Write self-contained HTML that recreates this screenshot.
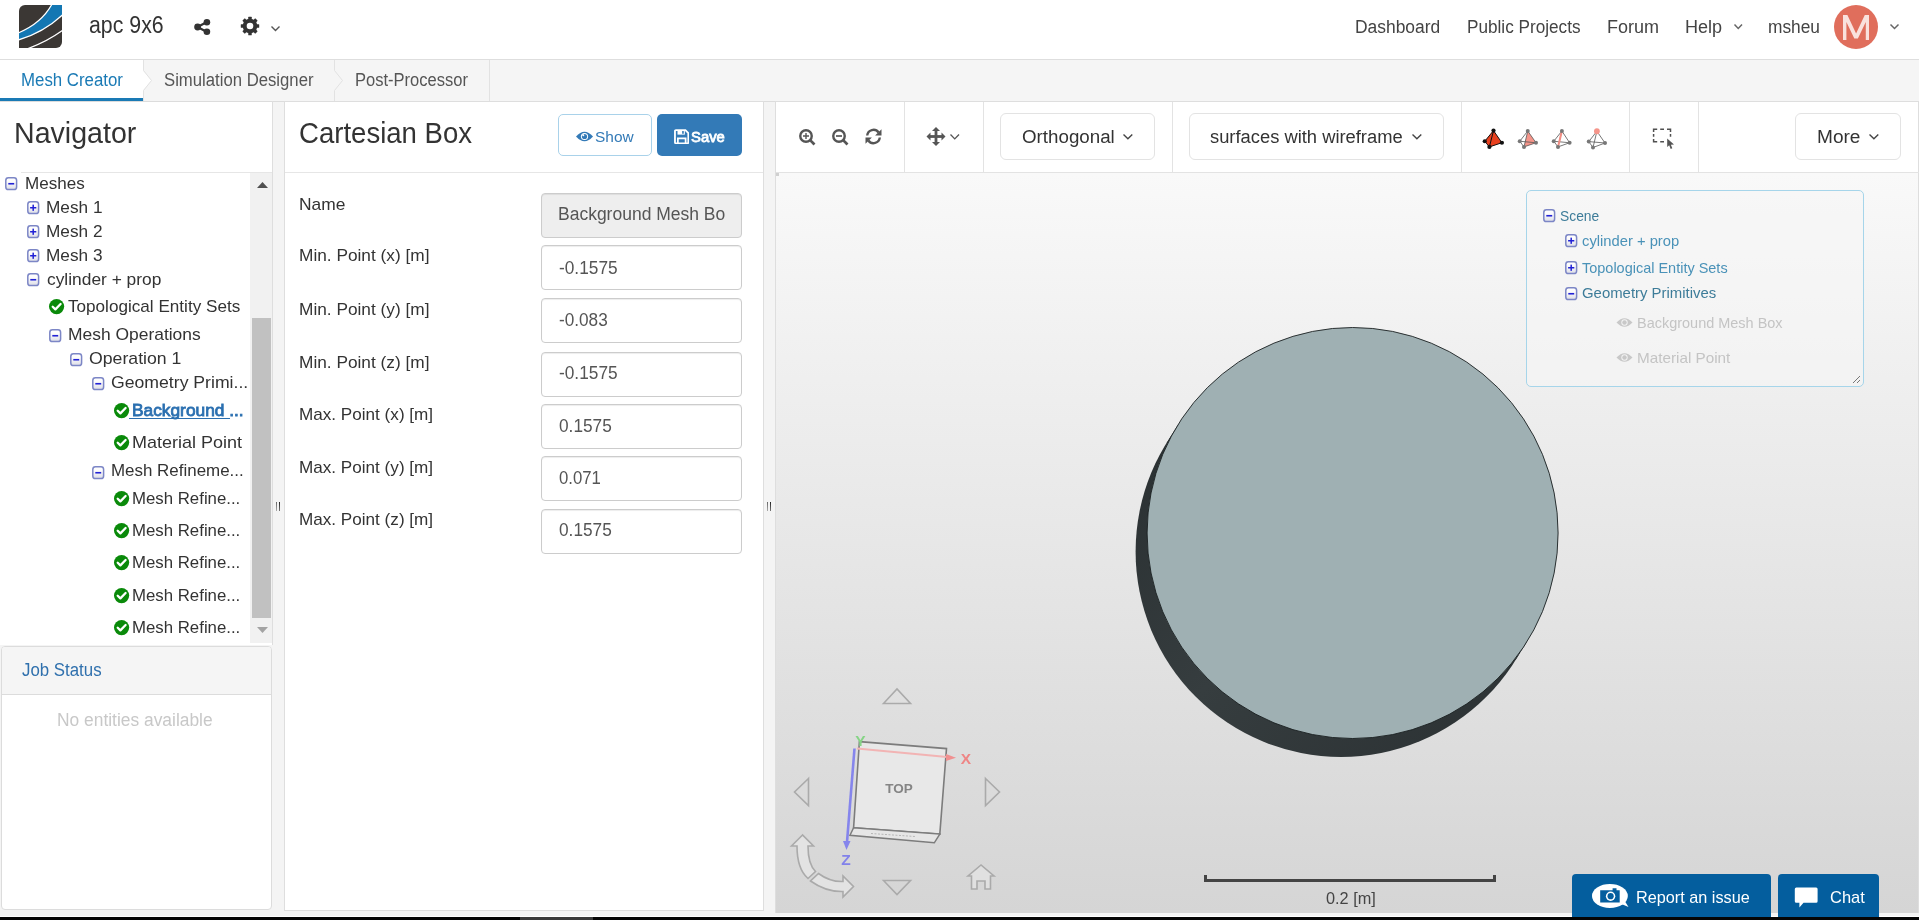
<!DOCTYPE html>
<html><head><meta charset="utf-8"><title>Mesh Creator</title><style>
*{box-sizing:border-box}
html,body{margin:0;padding:0}
body{width:1919px;height:920px;overflow:hidden;position:relative;background:#f4f4f4;font-family:"Liberation Sans",sans-serif}
.a{position:absolute;display:block}
.t{position:absolute;white-space:pre;transform-origin:0 0;font-family:"Liberation Sans",sans-serif}
.ti{position:absolute;width:12px;height:12px;border:1px solid #8592cc;border-radius:3px;background:linear-gradient(#fff 35%,#d4d6e0)}
.ti i{position:absolute;background:#2d2fd8}
.ti i.h{left:1.7px;top:4.1px;width:6.6px;height:1.8px}
.ti i.v{left:4.2px;top:1.7px;width:1.6px;height:6.6px}
.fld{position:absolute;left:541px;width:201px;height:45px;border:1px solid #ccc;border-radius:4px;background:#fff;box-shadow:inset 0 1px 1px rgba(0,0,0,.075)}
.sep{position:absolute;top:102px;width:1px;height:70px;background:#e3e3e3}
.dd{position:absolute;top:113px;height:46px;border:1px solid #e3e3e3;border-radius:6px;background:#fff}
</style></head><body>
<div class="a" style="left:0;top:0;width:1919px;height:59px;background:#fff"></div>
<div class="a" style="left:0;top:59px;width:1919px;height:1px;background:#dedede"></div>
<svg class="a" style="left:19px;top:5px" width="43" height="43" viewBox="0 0 43 43">
<defs><clipPath id="lc"><path d="M6 0H43V37A6 6 0 0 1 37 43H0V6A6 6 0 0 1 6 0Z"/></clipPath></defs>
<g clip-path="url(#lc)"><rect width="43" height="43" fill="#3b3734"/>
<path d="M32.75 -0.5 C27 10 18 20 0 27.6 L0 34.8 C17 30 31 21.5 43.5 10 L43.5 -0.5Z" fill="#1377b3"/>
<path d="M32.75 -0.5 C27 10 18 20 -0.5 27.8" stroke="#fff" stroke-width="1.25" fill="none"/>
<path d="M43.5 10 C31 21.5 17 30 -0.5 34.9" stroke="#fff" stroke-width="1.25" fill="none"/>
<path d="M43.5 25.5 C33 33 22 39 9 43.5" stroke="#fff" stroke-width="1.25" fill="none"/>
</g></svg>
<svg class="a" style="left:193.4px;top:18.4px" width="19" height="18" viewBox="0 0 19 18">
<path d="M4.5 9 L13.5 4.2 M4.5 9 L13.5 13.8" stroke="#333" stroke-width="2.2"/>
<circle cx="4.6" cy="9" r="3.4" fill="#333"/><circle cx="13.9" cy="4.3" r="3.3" fill="#333"/><circle cx="13.9" cy="13.7" r="3.3" fill="#333"/></svg>
<svg class="a" style="left:240.4px;top:16.3px" width="20" height="20" viewBox="-10 -10 20 20">
<g fill="#333"><rect x="-1.75" y="-9.2" width="3.5" height="5" rx="0.5" transform="rotate(0)"/><rect x="-1.75" y="-9.2" width="3.5" height="5" rx="0.5" transform="rotate(45)"/><rect x="-1.75" y="-9.2" width="3.5" height="5" rx="0.5" transform="rotate(90)"/><rect x="-1.75" y="-9.2" width="3.5" height="5" rx="0.5" transform="rotate(135)"/><rect x="-1.75" y="-9.2" width="3.5" height="5" rx="0.5" transform="rotate(180)"/><rect x="-1.75" y="-9.2" width="3.5" height="5" rx="0.5" transform="rotate(225)"/><rect x="-1.75" y="-9.2" width="3.5" height="5" rx="0.5" transform="rotate(270)"/><rect x="-1.75" y="-9.2" width="3.5" height="5" rx="0.5" transform="rotate(315)"/><circle r="7.3"/></g><circle r="3.3" fill="#fff"/></svg>
<svg class="a" style="left:270px;top:25px" width="11" height="7" viewBox="-1 -1 11 7"><path d="M0.5 0.5 L4.5 4.5 L8.5 0.5" fill="none" stroke="#555" stroke-width="1.4"/></svg>
<svg class="a" style="left:1733px;top:22.5px" width="10.5" height="7" viewBox="-1 -1 10.5 7"><path d="M0.5 0.5 L4.25 4.5 L8.0 0.5" fill="none" stroke="#666" stroke-width="1.5"/></svg>
<div class="a" style="left:1834px;top:5px;width:44px;height:44px;border-radius:50%;background:#e06e5c"></div>
<svg class="a" style="left:1843px;top:14.7px" width="26.2" height="25.2" viewBox="0 0 26.2 25.2"><path d="M0 25.2 V0 H4.4 L13.1 18.6 L21.8 0 H26.2 V25.2 H22.8 V7 L14.9 23.6 H11.3 L3.4 7 V25.2Z" fill="#f9e1dd"/></svg>
<svg class="a" style="left:1889px;top:22.5px" width="11" height="7" viewBox="-1 -1 11 7"><path d="M0.5 0.5 L4.5 4.5 L8.5 0.5" fill="none" stroke="#666" stroke-width="1.5"/></svg>
<div class="a" style="left:0;top:60px;width:1919px;height:41px;background:#f5f5f5"></div>
<div class="a" style="left:0;top:101px;width:1919px;height:1px;background:#dcdcdc"></div>
<div class="a" style="left:0;top:60px;width:143px;height:41px;background:#fff"></div>
<div class="a" style="left:0;top:98px;width:143px;height:3px;background:#1a7ab5"></div>
<svg class="a" style="left:141px;top:60px" width="14" height="41" viewBox="0 0 14 41"><path d="M2 0 V10.5 L10.5 20.5 L2 30.5 V41" fill="#fff" stroke="none"/><path d="M2.5 0 V10.5 L10.5 20.5 L2.5 30.5 V41" fill="none" stroke="#e2e2e2" stroke-width="1"/></svg>
<svg class="a" style="left:333px;top:60px" width="14" height="41" viewBox="0 0 14 41"><path d="M1.5 0 V10.5 L9.5 20.5 L1.5 30.5 V41" fill="none" stroke="#e2e2e2" stroke-width="1"/></svg>
<div class="a" style="left:489px;top:60px;width:1px;height:41px;background:#e2e2e2"></div>
<div class="a" style="left:0;top:102px;width:272px;height:543px;background:#fff"></div>
<div class="a" style="left:272px;top:101px;width:1px;height:544px;background:#dedede"></div>
<div class="a" style="left:21px;top:172px;width:251px;height:1px;background:#e6e6e6"></div>
<div class="a" style="left:250px;top:173px;width:22px;height:470px;background:#f1f1f1"></div>
<div class="a" style="left:252px;top:318px;width:19px;height:300px;background:#c1c1c1"></div>
<svg class="a" style="left:256px;top:181px" width="13" height="8"><path d="M1 7 L6.5 1 L12 7Z" fill="#505050"/></svg>
<svg class="a" style="left:256px;top:626px" width="13" height="8"><path d="M1 1 L6.5 7 L12 1Z" fill="#a3a3a3"/></svg>
<svg class="a" style="left:4.80px;top:176.90px" width="13" height="14" viewBox="0 0 13 14"><defs><linearGradient id="tg" x1="0" y1="0" x2="0" y2="1"><stop offset="0.3" stop-color="#fdfdfd"/><stop offset="1" stop-color="#dcdde6"/></linearGradient></defs><rect x="0.8" y="0.8" width="10.8" height="11.8" rx="2.6" fill="url(#tg)" stroke="#7c86c6" stroke-width="1.5"/><rect x="3.3" y="5.95" width="5.9" height="1.6" fill="#2222d6"/></svg>
<svg class="a" style="left:26.80px;top:200.90px" width="13" height="14" viewBox="0 0 13 14"><rect x="0.8" y="0.8" width="10.8" height="11.8" rx="2.6" fill="url(#tg)" stroke="#7c86c6" stroke-width="1.5"/><rect x="3.1" y="6.0" width="6.2" height="1.5" fill="#2222d6"/><rect x="5.45" y="3.65" width="1.5" height="6.2" fill="#2222d6"/></svg>
<svg class="a" style="left:26.80px;top:224.90px" width="13" height="14" viewBox="0 0 13 14"><rect x="0.8" y="0.8" width="10.8" height="11.8" rx="2.6" fill="url(#tg)" stroke="#7c86c6" stroke-width="1.5"/><rect x="3.1" y="6.0" width="6.2" height="1.5" fill="#2222d6"/><rect x="5.45" y="3.65" width="1.5" height="6.2" fill="#2222d6"/></svg>
<svg class="a" style="left:26.80px;top:248.90px" width="13" height="14" viewBox="0 0 13 14"><rect x="0.8" y="0.8" width="10.8" height="11.8" rx="2.6" fill="url(#tg)" stroke="#7c86c6" stroke-width="1.5"/><rect x="3.1" y="6.0" width="6.2" height="1.5" fill="#2222d6"/><rect x="5.45" y="3.65" width="1.5" height="6.2" fill="#2222d6"/></svg>
<svg class="a" style="left:26.80px;top:272.90px" width="13" height="14" viewBox="0 0 13 14"><defs><linearGradient id="tg" x1="0" y1="0" x2="0" y2="1"><stop offset="0.3" stop-color="#fdfdfd"/><stop offset="1" stop-color="#dcdde6"/></linearGradient></defs><rect x="0.8" y="0.8" width="10.8" height="11.8" rx="2.6" fill="url(#tg)" stroke="#7c86c6" stroke-width="1.5"/><rect x="3.3" y="5.95" width="5.9" height="1.6" fill="#2222d6"/></svg>
<svg class="a" style="left:47.90px;top:297.90px" width="17.2" height="17.2" viewBox="-8.6 -8.6 17.2 17.2"><circle r="7.6" fill="#0a8a0a"/><path d="M-3.9 0.1 L-1.2 2.8 L4 -2.6" stroke="#fff" stroke-width="2.3" fill="none" stroke-linecap="round" stroke-linejoin="round"/></svg>
<svg class="a" style="left:48.80px;top:328.90px" width="13" height="14" viewBox="0 0 13 14"><defs><linearGradient id="tg" x1="0" y1="0" x2="0" y2="1"><stop offset="0.3" stop-color="#fdfdfd"/><stop offset="1" stop-color="#dcdde6"/></linearGradient></defs><rect x="0.8" y="0.8" width="10.8" height="11.8" rx="2.6" fill="url(#tg)" stroke="#7c86c6" stroke-width="1.5"/><rect x="3.3" y="5.95" width="5.9" height="1.6" fill="#2222d6"/></svg>
<svg class="a" style="left:69.80px;top:352.90px" width="13" height="14" viewBox="0 0 13 14"><defs><linearGradient id="tg" x1="0" y1="0" x2="0" y2="1"><stop offset="0.3" stop-color="#fdfdfd"/><stop offset="1" stop-color="#dcdde6"/></linearGradient></defs><rect x="0.8" y="0.8" width="10.8" height="11.8" rx="2.6" fill="url(#tg)" stroke="#7c86c6" stroke-width="1.5"/><rect x="3.3" y="5.95" width="5.9" height="1.6" fill="#2222d6"/></svg>
<svg class="a" style="left:91.80px;top:376.90px" width="13" height="14" viewBox="0 0 13 14"><defs><linearGradient id="tg" x1="0" y1="0" x2="0" y2="1"><stop offset="0.3" stop-color="#fdfdfd"/><stop offset="1" stop-color="#dcdde6"/></linearGradient></defs><rect x="0.8" y="0.8" width="10.8" height="11.8" rx="2.6" fill="url(#tg)" stroke="#7c86c6" stroke-width="1.5"/><rect x="3.3" y="5.95" width="5.9" height="1.6" fill="#2222d6"/></svg>
<svg class="a" style="left:113.00px;top:402.00px" width="17.2" height="17.2" viewBox="-8.6 -8.6 17.2 17.2"><circle r="7.6" fill="#0a8a0a"/><path d="M-3.9 0.1 L-1.2 2.8 L4 -2.6" stroke="#fff" stroke-width="2.3" fill="none" stroke-linecap="round" stroke-linejoin="round"/></svg>
<div class="a" style="left:129px;top:418px;width:101px;height:1.3px;background:#2a6fb0"></div>
<svg class="a" style="left:113.00px;top:434.00px" width="17.2" height="17.2" viewBox="-8.6 -8.6 17.2 17.2"><circle r="7.6" fill="#0a8a0a"/><path d="M-3.9 0.1 L-1.2 2.8 L4 -2.6" stroke="#fff" stroke-width="2.3" fill="none" stroke-linecap="round" stroke-linejoin="round"/></svg>
<svg class="a" style="left:91.80px;top:465.70px" width="13" height="14" viewBox="0 0 13 14"><defs><linearGradient id="tg" x1="0" y1="0" x2="0" y2="1"><stop offset="0.3" stop-color="#fdfdfd"/><stop offset="1" stop-color="#dcdde6"/></linearGradient></defs><rect x="0.8" y="0.8" width="10.8" height="11.8" rx="2.6" fill="url(#tg)" stroke="#7c86c6" stroke-width="1.5"/><rect x="3.3" y="5.95" width="5.9" height="1.6" fill="#2222d6"/></svg>
<svg class="a" style="left:113.00px;top:489.80px" width="17.2" height="17.2" viewBox="-8.6 -8.6 17.2 17.2"><circle r="7.6" fill="#0a8a0a"/><path d="M-3.9 0.1 L-1.2 2.8 L4 -2.6" stroke="#fff" stroke-width="2.3" fill="none" stroke-linecap="round" stroke-linejoin="round"/></svg>
<svg class="a" style="left:113.00px;top:522.10px" width="17.2" height="17.2" viewBox="-8.6 -8.6 17.2 17.2"><circle r="7.6" fill="#0a8a0a"/><path d="M-3.9 0.1 L-1.2 2.8 L4 -2.6" stroke="#fff" stroke-width="2.3" fill="none" stroke-linecap="round" stroke-linejoin="round"/></svg>
<svg class="a" style="left:113.00px;top:554.00px" width="17.2" height="17.2" viewBox="-8.6 -8.6 17.2 17.2"><circle r="7.6" fill="#0a8a0a"/><path d="M-3.9 0.1 L-1.2 2.8 L4 -2.6" stroke="#fff" stroke-width="2.3" fill="none" stroke-linecap="round" stroke-linejoin="round"/></svg>
<svg class="a" style="left:113.00px;top:586.60px" width="17.2" height="17.2" viewBox="-8.6 -8.6 17.2 17.2"><circle r="7.6" fill="#0a8a0a"/><path d="M-3.9 0.1 L-1.2 2.8 L4 -2.6" stroke="#fff" stroke-width="2.3" fill="none" stroke-linecap="round" stroke-linejoin="round"/></svg>
<svg class="a" style="left:113.00px;top:618.80px" width="17.2" height="17.2" viewBox="-8.6 -8.6 17.2 17.2"><circle r="7.6" fill="#0a8a0a"/><path d="M-3.9 0.1 L-1.2 2.8 L4 -2.6" stroke="#fff" stroke-width="2.3" fill="none" stroke-linecap="round" stroke-linejoin="round"/></svg>
<div class="a" style="left:276px;top:502px;width:1px;height:9px;background:linear-gradient(#666,#aaa)"></div><div class="a" style="left:279px;top:502px;width:1px;height:9px;background:linear-gradient(#222,#777)"></div>
<div class="a" style="left:767px;top:502px;width:1px;height:9px;background:linear-gradient(#666,#aaa)"></div><div class="a" style="left:770px;top:502px;width:1px;height:9px;background:linear-gradient(#222,#777)"></div>
<div class="a" style="left:1px;top:646px;width:271px;height:264px;border:1px solid #dcdcdc;border-radius:4px;background:#fff;overflow:hidden"><div style="height:48px;background:#f5f5f5;border-bottom:1px solid #dcdcdc"></div></div>
<div class="a" style="left:284px;top:101px;width:480px;height:810px;border:1px solid #dedede;background:#fff"></div>
<div class="a" style="left:285px;top:172px;width:478px;height:1px;background:#e6e6e6"></div>
<div class="a" style="left:558px;top:114px;width:94px;height:42px;border:1px solid #a9d2ea;border-radius:5px;background:#fff"></div>
<div class="a" style="left:657px;top:114px;width:85px;height:42px;border-radius:5px;background:#337ab7"></div>
<svg class="a" style="left:575px;top:130px" width="19" height="13" viewBox="0 0 19 13"><path d="M1 6.5 Q9.5 -3 18 6.5 Q9.5 16 1 6.5Z" fill="#337ab7"/><circle cx="9.5" cy="6.5" r="3.6" fill="#fff"/><circle cx="9.5" cy="6.5" r="2.6" fill="#337ab7"/><circle cx="8.3" cy="5.3" r="1" fill="#fff"/></svg>
<svg class="a" style="left:673.5px;top:128.6px" width="15.5" height="15.5" viewBox="0 0 16 16"><path d="M2 1.2 H11.8 L14.8 4.2 V13.8 Q14.8 14.8 13.8 14.8 H2 Q1 14.8 1 13.8 V2.2 Q1 1.2 2 1.2Z" fill="none" stroke="#fff" stroke-width="1.9"/><rect x="3.6" y="1.2" width="7.6" height="4.6" fill="#fff"/><rect x="8.4" y="2.1" width="1.7" height="2.8" fill="#337ab7"/><path d="M4 14.8 V9.6 H12 V14.8" fill="none" stroke="#fff" stroke-width="1.8"/></svg>
<div class="fld" style="top:193.4px;background:#eee"></div>
<div class="fld" style="top:245.4px;background:#fff"></div>
<div class="fld" style="top:298.4px;background:#fff"></div>
<div class="fld" style="top:351.5px;background:#fff"></div>
<div class="fld" style="top:403.6px;background:#fff"></div>
<div class="fld" style="top:456.3px;background:#fff"></div>
<div class="fld" style="top:508.7px;background:#fff"></div>
<div class="a" style="left:775px;top:101px;width:1144px;height:812px;border:1px solid #dedede;border-bottom:none;background:#fff"></div>
<div class="a" style="left:776px;top:172px;width:1143px;height:1px;background:#e3e3e3"></div>
<div class="a" style="left:776px;top:173px;width:1142px;height:740px;background:linear-gradient(#f9f9f9,#d5d5d5)"></div>
<div class="a" style="left:776px;top:173px;width:3px;height:3px;background:#d0d0d0"></div>
<div class="sep" style="left:904px"></div>
<div class="sep" style="left:983px"></div>
<div class="sep" style="left:1172px"></div>
<div class="sep" style="left:1461px"></div>
<div class="sep" style="left:1629px"></div>
<div class="sep" style="left:1698px"></div>
<div class="dd" style="left:1000px;width:155px;top:113.2px;height:46.5px"></div>
<div class="dd" style="left:1189px;width:255px;top:113.2px;height:46.5px"></div>
<div class="dd" style="left:1795px;width:106px;top:113.2px;height:46.5px"></div>
<svg class="a" style="left:1122px;top:133.2px" width="11.8" height="7.2" viewBox="-1 -1 11.8 7.2"><path d="M0.5 0.5 L4.9 4.7 L9.3 0.5" fill="none" stroke="#444" stroke-width="1.4"/></svg>
<svg class="a" style="left:1411px;top:133.2px" width="11.8" height="7.2" viewBox="-1 -1 11.8 7.2"><path d="M0.5 0.5 L4.9 4.7 L9.3 0.5" fill="none" stroke="#444" stroke-width="1.4"/></svg>
<svg class="a" style="left:1868px;top:133.2px" width="11.8" height="7.2" viewBox="-1 -1 11.8 7.2"><path d="M0.5 0.5 L4.9 4.7 L9.3 0.5" fill="none" stroke="#444" stroke-width="1.4"/></svg>
<svg class="a" style="left:948.5px;top:133px" width="11.5" height="7.4" viewBox="-1 -1 11.5 7.4"><path d="M0.5 0.5 L4.75 4.9 L9.0 0.5" fill="none" stroke="#555" stroke-width="1.35"/></svg>
<svg class="a" style="left:798.6px;top:128.65px" width="18" height="18" viewBox="0 0 18 18"><circle cx="7" cy="7" r="5.75" fill="none" stroke="#555" stroke-width="2.4"/><path d="M10.9 10.9 L15.5 15.5" stroke="#555" stroke-width="2.7"/><path d="M7 4 V10 M4 7 H10" stroke="#555" stroke-width="1.4"/></svg>
<svg class="a" style="left:831.9px;top:128.65px" width="18" height="18" viewBox="0 0 18 18"><circle cx="7" cy="7" r="5.75" fill="none" stroke="#555" stroke-width="2.4"/><path d="M10.9 10.9 L15.5 15.5" stroke="#555" stroke-width="2.7"/><path d="M4 7 H10" stroke="#555" stroke-width="1.7"/></svg>
<svg class="a" style="left:864.5px;top:128px" width="17" height="17" viewBox="0 0 17 17"><g fill="none" stroke="#555" stroke-width="2.4"><path d="M2.2 7.5 A6.3 6.3 0 0 1 13.6 4.5"/><path d="M14.8 9.5 A6.3 6.3 0 0 1 3.4 12.5"/></g><path d="M16.5 1.2 V7.6 H10.1Z" fill="#555"/><path d="M0.5 15.8 V9.4 H6.9Z" fill="#555"/></svg>
<svg class="a" style="left:926.3px;top:127.1px" width="20" height="19" viewBox="0 0 20 19"><g fill="#555"><rect x="8.6" y="3" width="2.8" height="13"/><rect x="3" y="8.1" width="14" height="2.8"/><path d="M10 0 L14 4 H6Z M10 19 L14 15 H6Z M0.5 9.5 L4.5 5.5 V13.5Z M19.5 9.5 L15.5 5.5 V13.5Z"/></g></svg>
<svg class="a" style="left:1470px;top:115px" width="150" height="45" viewBox="1470 115 150 45"><path d="M1493.5,130.6 L1484.75,141.25 L1489.4,146.9 L1501.9,142.75Z" fill="#e8401e" stroke="#111" stroke-width="1"/><path d="M1493.5,130.6 L1489.4,146.9" stroke="#111" stroke-width="1"/><circle cx="1493.5" cy="130.6" r="2.1" fill="#111"/><circle cx="1484.75" cy="141.25" r="2.1" fill="#111"/><circle cx="1489.4" cy="146.9" r="2.1" fill="#111"/><circle cx="1501.9" cy="142.75" r="2.1" fill="#111"/><path d="M1527.75,131 L1524,146.9 L1536,142.75Z" fill="#f5958a"/><path d="M1527.75,131 L1519.75,141.25" stroke="#555" stroke-width="0.8"/><path d="M1527.75,131 L1524,146.9" stroke="#555" stroke-width="0.8"/><path d="M1527.75,131 L1536,142.75" stroke="#555" stroke-width="0.8"/><path d="M1519.75,141.25 L1524,146.9" stroke="#555" stroke-width="0.8"/><path d="M1524,146.9 L1536,142.75" stroke="#555" stroke-width="0.8"/><path d="M1519.75,141.25 L1536,142.75" stroke="#555" stroke-width="0.8"/><circle cx="1519.75" cy="141.25" r="2" fill="#777"/><circle cx="1524" cy="146.9" r="2" fill="#777"/><circle cx="1536" cy="142.75" r="2" fill="#777"/><circle cx="1527.75" cy="131" r="2" fill="#777"/><path d="M1561.9,131 L1553.75,141.25" stroke="#555" stroke-width="0.8"/><path d="M1561.9,131 L1558,146.9" stroke="#555" stroke-width="0.8"/><path d="M1561.9,131 L1569.6,142.75" stroke="#555" stroke-width="0.8"/><path d="M1553.75,141.25 L1558,146.9" stroke="#555" stroke-width="0.8"/><path d="M1558,146.9 L1569.6,142.75" stroke="#555" stroke-width="0.8"/><path d="M1553.75,141.25 L1569.6,142.75" stroke="#555" stroke-width="0.8"/><path d="M1561.9,131 L1558,146.9" stroke="#f28e84" stroke-width="2"/><circle cx="1553.75" cy="141.25" r="2" fill="#777"/><circle cx="1558" cy="146.9" r="2" fill="#777"/><circle cx="1569.6" cy="142.75" r="2" fill="#777"/><circle cx="1561.9" cy="131" r="2" fill="#777"/><path d="M1596.9,131.25 L1588.75,141.6" stroke="#555" stroke-width="0.8"/><path d="M1596.9,131.25 L1593,147.5" stroke="#555" stroke-width="0.8"/><path d="M1596.9,131.25 L1605,143" stroke="#555" stroke-width="0.8"/><path d="M1588.75,141.6 L1593,147.5" stroke="#555" stroke-width="0.8"/><path d="M1593,147.5 L1605,143" stroke="#555" stroke-width="0.8"/><path d="M1588.75,141.6 L1605,143" stroke="#555" stroke-width="0.8"/><circle cx="1588.75" cy="141.6" r="2" fill="#777"/><circle cx="1593" cy="147.5" r="2" fill="#777"/><circle cx="1605" cy="143" r="2" fill="#777"/><circle cx="1596.9" cy="131.25" r="2.9" fill="#f5958a"/></svg>
<svg class="a" style="left:1650px;top:126px" width="28" height="28" viewBox="1650 126 28 28"><path d="M1653.6 132 V129.2 H1657.2 M1660.2 129.2 H1664 M1667 129.2 H1670.5 V132 M1653.6 133.9 V136.8 M1670.5 133.9 V136.8 M1653.6 138.9 V141.7 H1657.2 M1660.2 141.7 H1664" fill="none" stroke="#505050" stroke-width="1.5"/><path d="M1667.2 138.5 V147 L1669.2 145.2 L1670.7 149 L1672.3 148.3 L1670.9 144.7 L1674 144.5Z" fill="#555"/></svg>
<div class="a" style="left:1526px;top:190px;width:338px;height:197px;border:1px solid #a6d5ea;border-radius:5px;background:rgba(245,245,245,0.55)"></div>
<svg class="a" style="left:1851px;top:374px" width="10" height="10"><path d="M9 2 L2 9 M9 6 L6 9" stroke="#777" stroke-width="1"/></svg>
<svg class="a" style="left:1543.30px;top:209.40px" width="13" height="14" viewBox="0 0 13 14"><defs><linearGradient id="tg" x1="0" y1="0" x2="0" y2="1"><stop offset="0.3" stop-color="#fdfdfd"/><stop offset="1" stop-color="#dcdde6"/></linearGradient></defs><rect x="0.8" y="0.8" width="10.8" height="11.8" rx="2.6" fill="url(#tg)" stroke="#7c86c6" stroke-width="1.5"/><rect x="3.3" y="5.95" width="5.9" height="1.6" fill="#2222d6"/></svg>
<svg class="a" style="left:1565.30px;top:234.40px" width="13" height="14" viewBox="0 0 13 14"><rect x="0.8" y="0.8" width="10.8" height="11.8" rx="2.6" fill="url(#tg)" stroke="#7c86c6" stroke-width="1.5"/><rect x="3.1" y="6.0" width="6.2" height="1.5" fill="#2222d6"/><rect x="5.45" y="3.65" width="1.5" height="6.2" fill="#2222d6"/></svg>
<svg class="a" style="left:1565.30px;top:261.40px" width="13" height="14" viewBox="0 0 13 14"><rect x="0.8" y="0.8" width="10.8" height="11.8" rx="2.6" fill="url(#tg)" stroke="#7c86c6" stroke-width="1.5"/><rect x="3.1" y="6.0" width="6.2" height="1.5" fill="#2222d6"/><rect x="5.45" y="3.65" width="1.5" height="6.2" fill="#2222d6"/></svg>
<svg class="a" style="left:1565.30px;top:287.20px" width="13" height="14" viewBox="0 0 13 14"><defs><linearGradient id="tg" x1="0" y1="0" x2="0" y2="1"><stop offset="0.3" stop-color="#fdfdfd"/><stop offset="1" stop-color="#dcdde6"/></linearGradient></defs><rect x="0.8" y="0.8" width="10.8" height="11.8" rx="2.6" fill="url(#tg)" stroke="#7c86c6" stroke-width="1.5"/><rect x="3.3" y="5.95" width="5.9" height="1.6" fill="#2222d6"/></svg>
<svg class="a" style="left:1615.5px;top:317px" width="17" height="11" viewBox="0 0 17 11"><path d="M0.5 5.5 Q8.5 -3 16.5 5.5 Q8.5 14 0.5 5.5Z" fill="#c8c8c8"/><circle cx="8.5" cy="5.5" r="3.2" fill="#f3f3f3"/><circle cx="8.5" cy="5.5" r="2.2" fill="#c8c8c8"/></svg>
<svg class="a" style="left:1615.5px;top:352px" width="17" height="11" viewBox="0 0 17 11"><path d="M0.5 5.5 Q8.5 -3 16.5 5.5 Q8.5 14 0.5 5.5Z" fill="#c8c8c8"/><circle cx="8.5" cy="5.5" r="3.2" fill="#f3f3f3"/><circle cx="8.5" cy="5.5" r="2.2" fill="#c8c8c8"/></svg>
<svg class="a" style="left:1100px;top:300px" width="500" height="480" viewBox="1100 300 500 480"><defs><linearGradient id="cg" x1="0" y1="0" x2="1" y2="1"><stop offset="0" stop-color="#262c2e"/><stop offset="0.5" stop-color="#363d3f"/><stop offset="1" stop-color="#2a3032"/></linearGradient></defs><circle cx="1341.1" cy="551.5" r="205.5" fill="url(#cg)"/><path d="M1527.1281343468984,641.4904618913152 L1515.6281343468984,659.9904618913152 L1166.5718656531014,443.0095381086847 L1178.0718656531014,424.5095381086847Z" fill="url(#cg)"/><circle cx="1352.6" cy="533.0" r="205.5" fill="#9fb0b3" stroke="#1a1f20" stroke-width="0.9"/></svg>
<svg class="a" style="left:776px;top:670px;will-change:transform" width="250" height="241" viewBox="776 670 250 241">
<g fill="none" stroke="#aaa" stroke-width="1.6">
<path d="M883.5 703.5 L897 689 L910.5 703.5Z"/>
<path d="M883.5 880.5 L897 894.5 L910.5 880.5Z"/>
<path d="M808.5 778.5 L794.5 792 L808.5 805.5Z"/>
<path d="M985.5 778.5 L999.5 792 L985.5 805.5Z"/>
<path d="M981 865 L968 876 H971.5 V889 H977 V881 H985 V889 H990.5 V876 H994 Z" fill="#e0e0e0"/>
<path d="M802.5 835 L791.5 846 H797 Q797 869 808 878.5 L815.5 871.5 Q808 864 808 846 H813.5Z" fill="#e3e3e3"/>
<path d="M810.5 881 Q826 892 843 891.5 V897 L853.5 886.5 L843 876 V881.5 Q830 882 818.5 873.5Z" fill="#e3e3e3"/>
</g>
<path d="M859.4 741.6 L946.5 748.6 L939.8 834.1 L853.6 827.8Z" fill="#e8e8e8" stroke="#7c7c7c" stroke-width="1.6"/>
<path d="M853.6 827.8 L850 835.3 L934.3 842.8 L939.8 834.1Z" fill="#e6e6e6" stroke="#7c7c7c" stroke-width="1.5"/>
<path d="M871 833.5 L915 836.5" stroke="#aaa" stroke-width="0.8" stroke-dasharray="2 1.5"/>
<text x="899" y="792.6" font-family="Liberation Sans" font-size="13.5" font-weight="bold" fill="#858585" text-anchor="middle">TOP</text>
<path d="M857 748.6 L947 757" stroke="#f2b4b4" stroke-width="2"/>
<path d="M946 754 L956 757.8 L946 761Z" fill="#f09090"/>
<text x="966" y="763.5" font-family="Liberation Sans" font-size="15.5" font-weight="bold" fill="#ee8585" text-anchor="middle">X</text>
<path d="M854.5 748.5 L847 842" stroke="#8585ec" stroke-width="2.6"/>
<path d="M843 841 L846.5 850 L850.5 841Z" fill="#8585ec"/>
<text x="846" y="864.5" font-family="Liberation Sans" font-size="15.5" font-weight="bold" fill="#8282ea" text-anchor="middle">Z</text>
<text x="860.5" y="745.5" font-family="Liberation Sans" font-size="15.5" font-weight="bold" fill="#86d486" text-anchor="middle">Y</text>
</svg>
<div class="a" style="left:1204px;top:879px;width:292px;height:3px;background:#444"></div>
<div class="a" style="left:1204px;top:875px;width:3px;height:7px;background:#444"></div>
<div class="a" style="left:1493px;top:875px;width:3px;height:7px;background:#444"></div>
<div class="a" style="left:0;top:916px;width:1919px;height:1px;background:#fff"></div>
<div class="a" style="left:0;top:917px;width:1919px;height:3px;background:#050505"></div>
<div class="a" style="left:520px;top:917px;width:73px;height:3px;background:#3a3a3a"></div>
<div class="a" style="left:1572px;top:873.8px;width:199px;height:43.2px;border-radius:4px 4px 0 0;background:#045e9e"></div>
<div class="a" style="left:1778.3px;top:873.8px;width:100.5px;height:43.2px;border-radius:4px 4px 0 0;background:#045e9e"></div>
<svg class="a" style="left:1590px;top:883px" width="40" height="26" viewBox="1590 883 40 26"><ellipse cx="1609.9" cy="896" rx="17.9" ry="11.9" fill="#fff"/><path d="M1619 903 L1628.5 907 L1623.5 899Z" fill="#fff"/><path d="M1600.2 890.3 H1612.6 V888.2 H1616.5 V890.3 H1619.7 V902.4 H1600.2Z" fill="#045e9e"/><circle cx="1610.6" cy="896.2" r="4.7" fill="#fff"/><circle cx="1610.6" cy="896.2" r="3.1" fill="#045e9e"/></svg>
<svg class="a" style="left:1794px;top:887px" width="25" height="22" viewBox="1794 887 25 22"><path d="M1796.3 887.6 H1816.1 Q1817.6 887.6 1817.6 889.1 V901.3 Q1817.6 902.8 1816.1 902.8 H1803.5 L1799.4 907.6 V902.8 H1796.3 Q1794.8 902.8 1794.8 901.3 V889.1 Q1794.8 887.6 1796.3 887.6Z" fill="#fff"/></svg>
<div class="a" style="left:0;top:0;width:1919px;height:920px;will-change:transform"><span class="t" style="left:89.37px;top:14.24px;font-size:23px;line-height:23px;color:#333;font-weight:400;transform:scaleX(0.9266)">apc 9x6</span>
<span class="t" style="left:1355.03px;top:17.97px;font-size:18px;line-height:18px;color:#444;font-weight:400;transform:scaleX(0.9674)">Dashboard</span>
<span class="t" style="left:1467.05px;top:17.97px;font-size:18px;line-height:18px;color:#444;font-weight:400;transform:scaleX(0.9534)">Public Projects</span>
<span class="t" style="left:1607.00px;top:17.97px;font-size:18px;line-height:18px;color:#444;font-weight:400;transform:scaleX(1.0000)">Forum</span>
<span class="t" style="left:1684.50px;top:17.97px;font-size:18px;line-height:18px;color:#444;font-weight:400;transform:scaleX(1.0028)">Help</span>
<span class="t" style="left:1768.44px;top:17.97px;font-size:18px;line-height:18px;color:#444;font-weight:400;transform:scaleX(0.9615)">msheu</span>
<span class="t" style="left:20.56px;top:70.77px;font-size:18px;line-height:18px;color:#1a7ab5;font-weight:400;transform:scaleX(0.9352)">Mesh Creator</span>
<span class="t" style="left:164.07px;top:70.77px;font-size:18px;line-height:18px;color:#555;font-weight:400;transform:scaleX(0.9281)">Simulation Designer</span>
<span class="t" style="left:355.08px;top:70.77px;font-size:18px;line-height:18px;color:#555;font-weight:400;transform:scaleX(0.9180)">Post-Processor</span>
<span class="t" style="left:14.03px;top:119.47px;font-size:29px;line-height:29px;color:#333;font-weight:400;transform:scaleX(0.9857)">Navigator</span>
<span class="t" style="left:24.50px;top:174.62px;font-size:17px;line-height:17px;color:#333;font-weight:400;transform:scaleX(1.0034)">Meshes</span>
<span class="t" style="left:46.29px;top:198.62px;font-size:17px;line-height:17px;color:#333;font-weight:400;transform:scaleX(1.0130)">Mesh 1</span>
<span class="t" style="left:46.29px;top:222.62px;font-size:17px;line-height:17px;color:#333;font-weight:400;transform:scaleX(1.0130)">Mesh 2</span>
<span class="t" style="left:46.29px;top:246.62px;font-size:17px;line-height:17px;color:#333;font-weight:400;transform:scaleX(1.0130)">Mesh 3</span>
<span class="t" style="left:46.60px;top:270.62px;font-size:17px;line-height:17px;color:#333;font-weight:400;transform:scaleX(1.0214)">cylinder + prop</span>
<span class="t" style="left:67.80px;top:297.92px;font-size:17px;line-height:17px;color:#333;font-weight:400;transform:scaleX(1.0070)">Topological Entity Sets</span>
<span class="t" style="left:67.77px;top:326.22px;font-size:17px;line-height:17px;color:#333;font-weight:400;transform:scaleX(1.0250)">Mesh Operations</span>
<span class="t" style="left:88.96px;top:350.22px;font-size:17px;line-height:17px;color:#333;font-weight:400;transform:scaleX(1.0398)">Operation 1</span>
<span class="t" style="left:110.56px;top:374.22px;font-size:17px;line-height:17px;color:#333;font-weight:400;transform:scaleX(1.0377)">Geometry Primi...</span>
<span class="t" style="left:131.98px;top:401.62px;font-size:17px;line-height:17px;color:#2a6fb0;font-weight:400;transform:scaleX(1.0185);-webkit-text-stroke:0.8px #2a6fb0">Background ...</span>
<span class="t" style="left:131.94px;top:433.82px;font-size:17px;line-height:17px;color:#333;font-weight:400;transform:scaleX(1.0583)">Material Point</span>
<span class="t" style="left:111.00px;top:461.62px;font-size:17px;line-height:17px;color:#333;font-weight:400;transform:scaleX(0.9962)">Mesh Refineme...</span>
<span class="t" style="left:132.01px;top:489.62px;font-size:17px;line-height:17px;color:#333;font-weight:400;transform:scaleX(0.9880)">Mesh Refine...</span>
<span class="t" style="left:132.01px;top:522.12px;font-size:17px;line-height:17px;color:#333;font-weight:400;transform:scaleX(0.9880)">Mesh Refine...</span>
<span class="t" style="left:132.01px;top:554.32px;font-size:17px;line-height:17px;color:#333;font-weight:400;transform:scaleX(0.9880)">Mesh Refine...</span>
<span class="t" style="left:132.01px;top:586.92px;font-size:17px;line-height:17px;color:#333;font-weight:400;transform:scaleX(0.9880)">Mesh Refine...</span>
<span class="t" style="left:132.01px;top:619.12px;font-size:17px;line-height:17px;color:#333;font-weight:400;transform:scaleX(0.9880)">Mesh Refine...</span>
<span class="t" style="left:21.90px;top:661.07px;font-size:18px;line-height:18px;color:#2f70ad;font-weight:400;transform:scaleX(0.9353)">Job Status</span>
<span class="t" style="left:57.43px;top:710.67px;font-size:18px;line-height:18px;color:#c8c8c8;font-weight:400;transform:scaleX(0.9662)">No entities available</span>
<span class="t" style="left:298.65px;top:119.17px;font-size:29px;line-height:29px;color:#333;font-weight:400;transform:scaleX(0.9503)">Cartesian Box</span>
<span class="t" style="left:594.77px;top:129.21px;font-size:15px;line-height:15px;color:#337ab7;font-weight:400;transform:scaleX(1.0297)">Show</span>
<span class="t" style="left:690.91px;top:129.21px;font-size:15px;line-height:15px;color:#fff;font-weight:400;transform:scaleX(0.9879);-webkit-text-stroke:0.8px #fff">Save</span>
<span class="t" style="left:298.58px;top:195.82px;font-size:17px;line-height:17px;color:#333;font-weight:400;transform:scaleX(1.0227)">Name</span>
<span class="t" style="left:298.58px;top:247.32px;font-size:17px;line-height:17px;color:#333;font-weight:400;transform:scaleX(1.0157)">Min. Point (x) [m]</span>
<span class="t" style="left:298.58px;top:300.92px;font-size:17px;line-height:17px;color:#333;font-weight:400;transform:scaleX(1.0157)">Min. Point (y) [m]</span>
<span class="t" style="left:298.58px;top:353.62px;font-size:17px;line-height:17px;color:#333;font-weight:400;transform:scaleX(1.0157)">Min. Point (z) [m]</span>
<span class="t" style="left:298.59px;top:406.02px;font-size:17px;line-height:17px;color:#333;font-weight:400;transform:scaleX(1.0069)">Max. Point (x) [m]</span>
<span class="t" style="left:298.59px;top:458.62px;font-size:17px;line-height:17px;color:#333;font-weight:400;transform:scaleX(1.0069)">Max. Point (y) [m]</span>
<span class="t" style="left:298.59px;top:510.82px;font-size:17px;line-height:17px;color:#333;font-weight:400;transform:scaleX(1.0069)">Max. Point (z) [m]</span>
<span class="t" style="left:1021.66px;top:127.57px;font-size:18px;line-height:18px;color:#333;font-weight:400;transform:scaleX(1.0414)">Orthogonal</span>
<span class="t" style="left:1209.98px;top:127.57px;font-size:18px;line-height:18px;color:#333;font-weight:400;transform:scaleX(1.0191)">surfaces with wireframe</span>
<span class="t" style="left:1816.54px;top:127.57px;font-size:18px;line-height:18px;color:#333;font-weight:400;transform:scaleX(1.0600)">More</span>
<span class="t" style="left:1559.78px;top:207.51px;font-size:15px;line-height:15px;color:#3d7c99;font-weight:400;transform:scaleX(0.9220)">Scene</span>
<span class="t" style="left:1582.00px;top:233.11px;font-size:15px;line-height:15px;color:#4a92b8;font-weight:400;transform:scaleX(0.9838)">cylinder + prop</span>
<span class="t" style="left:1582.00px;top:260.11px;font-size:15px;line-height:15px;color:#4a92b8;font-weight:400;transform:scaleX(0.9649)">Topological Entity Sets</span>
<span class="t" style="left:1582.00px;top:285.01px;font-size:15px;line-height:15px;color:#3d7c99;font-weight:400;transform:scaleX(0.9941)">Geometry Primitives</span>
<span class="t" style="left:1637.04px;top:314.91px;font-size:15px;line-height:15px;color:#c4c4c4;font-weight:400;transform:scaleX(0.9647)">Background Mesh Box</span>
<span class="t" style="left:1636.98px;top:350.31px;font-size:15px;line-height:15px;color:#c4c4c4;font-weight:400;transform:scaleX(1.0176)">Material Point</span>
<span class="t" style="left:558.03px;top:205.47px;font-size:18px;line-height:18px;color:#555;font-weight:400;transform:scaleX(0.9719)">Background Mesh Bo</span>
<span class="t" style="left:558.75px;top:258.77px;font-size:18px;line-height:18px;color:#555;font-weight:400;transform:scaleX(0.9598)">-0.1575</span>
<span class="t" style="left:558.90px;top:310.77px;font-size:18px;line-height:18px;color:#555;font-weight:400;transform:scaleX(0.9549)">-0.083</span>
<span class="t" style="left:558.75px;top:363.77px;font-size:18px;line-height:18px;color:#555;font-weight:400;transform:scaleX(0.9598)">-0.1575</span>
<span class="t" style="left:559.10px;top:416.77px;font-size:18px;line-height:18px;color:#555;font-weight:400;transform:scaleX(0.9582)">0.1575</span>
<span class="t" style="left:559.10px;top:469.07px;font-size:18px;line-height:18px;color:#555;font-weight:400;transform:scaleX(0.9311)">0.071</span>
<span class="t" style="left:559.10px;top:521.47px;font-size:18px;line-height:18px;color:#555;font-weight:400;transform:scaleX(0.9582)">0.1575</span>
<span class="t" style="left:1325.50px;top:891.06px;font-size:16px;line-height:16px;color:#444;font-weight:400;transform:scaleX(1.0188)">0.2 [m]</span>
<span class="t" style="left:1636.24px;top:888.82px;font-size:17px;line-height:17px;color:#fff;font-weight:400;transform:scaleX(0.9551)">Report an issue</span>
<span class="t" style="left:1830.33px;top:888.82px;font-size:17px;line-height:17px;color:#fff;font-weight:400;transform:scaleX(0.9686)">Chat</span></div>
</body></html>
